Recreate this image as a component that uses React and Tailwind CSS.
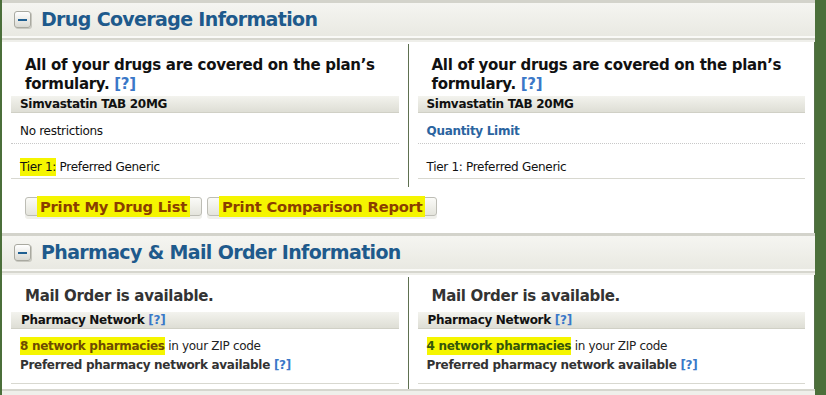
import React from "react";

const font = { fontFamily: '"DejaVu Sans", Verdana, sans-serif' };

function Minus() {
  return (
    <div className="w-[17px] h-[17px] rounded-[3px] border border-[#a9a9a0] bg-gradient-to-b from-[#ffffff] to-[#d9d9d2] flex items-center justify-center shadow-[1px_1px_0_#c8c8c0]">
      <div className="w-[9px] h-[2px] bg-[#1f5f91]" />
    </div>
  );
}

function SectionHeader({ title }) {
  return (
    <div className="border-t-[3px] border-[#d3d3cb]">
      <div className="h-[33px] bg-gradient-to-b from-[#f5f5f1] to-[#e9e9e2] flex items-center pl-[12px] gap-[10px]">
        <Minus />
        <div className="text-[19px] font-bold text-[#1e5a8c] tracking-[-0.65px]">{title}</div>
      </div>
      <div className="h-[2px] bg-[#fafaf7]" />
      <div className="h-[2px] bg-[#d6d6ce]" />
      <div className="h-[2px] bg-[#efefea]" />
    </div>
  );
}

function Bar({ children }) {
  return (
    <div className="h-[17px] bg-gradient-to-b from-[#f3f3ee] to-[#deded5] border-b border-[#d0d0c6] pl-[9px] text-[12px] font-bold text-[#111] leading-[17px] tracking-[-0.3px]">
      {children}
    </div>
  );
}

function Q() {
  return <span className="text-[#3a78c8] font-bold">[?]</span>;
}

function DrugCol({ restriction, tierHighlight }) {
  return (
    <div className="flex-1 px-[9px] pt-[14px]">
      <div className="pl-[14px] text-[15px] font-bold text-[#111] leading-[19px] tracking-[-0.3px]">
        All of your drugs are covered on the plan’s formulary. <Q />
      </div>
      <div className="mt-[2px]">
        <Bar>Simvastatin TAB 20MG</Bar>
      </div>
      <div className="pl-[9px] h-[31px] pt-[6px] flex items-center text-[12px] tracking-[-0.3px] border-b border-dotted border-[#c8c8c8]">
        {restriction}
      </div>
      <div className="pl-[9px] h-[35px] pt-[11px] flex items-center text-[12px] text-[#111] tracking-[-0.3px] border-b border-[#d8d8d0]">
        {tierHighlight ? (
          <span>
            <span className="bg-[#f5f500] py-[2px]">Tier 1:</span> Preferred Generic
          </span>
        ) : (
          <span>Tier 1: Preferred Generic</span>
        )}
      </div>
    </div>
  );
}

function PharmCol({ count, countColor }) {
  return (
    <div className="flex-1 px-[9px] pt-[12px]">
      <div className="pl-[14px] text-[15px] font-bold text-[#333] leading-[19px] tracking-[-0.3px]">
        Mail Order is available.
      </div>
      <div className="mt-[6px]">
        <Bar>
          <span className="pl-[1px]">Pharmacy Network</span> <Q />
        </Bar>
      </div>
      <div className="pl-[9px] pt-[8px] text-[12px] leading-[19px] tracking-[-0.3px] text-[#222]">
        <div>
          <span className={"bg-[#f5f500] font-bold py-[2px] " + countColor}>{count} network pharmacies</span> in your ZIP code
        </div>
        <div className="font-bold text-[#333]">
          Preferred pharmacy network available <Q />
        </div>
      </div>
      <div className="mt-[8px] border-b border-[#d8d8d0]" />
    </div>
  );
}

function PrintButton({ children }) {
  return (
    <div className="h-[19px] rounded-[3px] border border-[#bdbdb5] bg-gradient-to-b from-[#fbfbf8] to-[#e4e4dc] shadow-[0_3px_0_#efefea] flex items-center px-[11px]">
      <span className="bg-[#f5f500] text-[#8a3e00] font-bold text-[14.7px] leading-[17px] px-[3px] py-[2px] tracking-[-0.2px]">
        {children}
      </span>
    </div>
  );
}

export default function App() {
  return (
    <div className="w-[826px] h-[395px] bg-[#4b6f3a] overflow-hidden" style={font}>
      <div className="ml-[2px] w-[813px] h-full bg-white flex flex-col">
        <SectionHeader title="Drug Coverage Information" />
        <div className="flex h-[145px] border-r border-[#56704a]">
          <DrugCol restriction={<span className="text-[#111]">No restrictions</span>} tierHighlight />
          <div className="w-[1px] bg-[#5e7050] mt-[2px]" />
          <DrugCol
            restriction={<span className="font-bold text-[#2a64a0]">Quantity Limit</span>}
          />
        </div>
        <div className="flex gap-[5px] pl-[23px] pt-[10px] pb-[17px] border-r border-[#56704a]">
          <PrintButton>Print My Drug List</PrintButton>
          <PrintButton>Print Comparison Report</PrintButton>
        </div>
        <SectionHeader title="Pharmacy & Mail Order Information" />
        <div className="flex h-[114px] border-r border-[#56704a]">
          <PharmCol count="8" countColor="text-[#6e4b00]" />
          <div className="w-[1px] bg-[#5e7050] mt-[2px]" />
          <PharmCol count="4" countColor="text-[#35560a]" />
        </div>
        <div className="h-[2px] bg-[#d6d6ce]" />
        <div className="flex-1 bg-[#efefea]" />
      </div>
    </div>
  );
}
